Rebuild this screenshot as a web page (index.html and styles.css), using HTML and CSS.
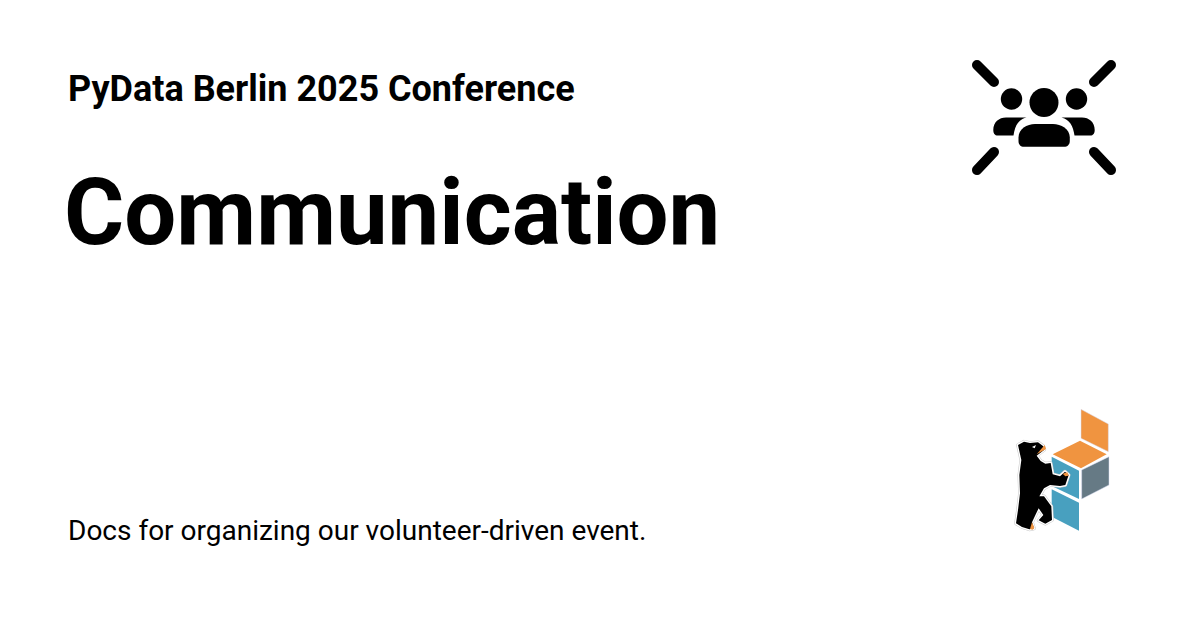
FILE: index.html
```html
<!DOCTYPE html>
<html lang="en">
<head>
<meta charset="utf-8">
<title>Communication</title>
<link rel="stylesheet" href="styles.css">
</head>
<body>
<main class="card">
  <div class="top">
    <div class="titles">
      <div class="site">PyData Berlin 2025 Conference</div>
      <h1 class="title">Communication</h1>
    </div>
    <svg class="icon" viewBox="960 50 170 135" width="170" height="135" aria-hidden="true">
      <g stroke="#000" stroke-width="10" stroke-linecap="round">
        <path d="M977 65 994 82M1111 65 1094 82M994 152 977 170M1094 152 1111 170"/>
      </g>
      <circle cx="1044" cy="102.5" r="14.5"/>
      <circle cx="1011.5" cy="99" r="10.7"/>
      <circle cx="1076.5" cy="99" r="10.7"/>
      <path d="M1018.5 137.5C1018.5 129 1027 124 1035 124H1053C1061 124 1069.8 129 1069.8 137.5V141C1069.8 144.5 1067.5 146.8 1064 146.8H1024C1020.5 146.8 1018.5 144.5 1018.5 141Z"/>
      <path d="M1026.5 117.4C1018 119.5 1015 126 1013.5 135.6H998C994.5 135.6 993.3 133 993.3 130C993.3 122 999 117.4 1006 117.4Z"/>
      <path d="M1061.5 117.4C1070 119.5 1073 126 1074.5 135.6H1090C1093.5 135.6 1094.7 133 1094.7 130C1094.7 122 1089 117.4 1082 117.4Z"/>
    </svg>
  </div>
  <div class="bottom">
    <p class="desc">Docs for organizing our volunteer-driven event.</p>
    <svg class="logo" viewBox="0 0 345 420" width="115" height="140" aria-hidden="true">
      <defs>
        <path id="bear" d="M24 30 42 20 60 24 84 22 100 34 103 44 80 62 92 78 106 86 122 84 128 118 150 124 165 110 176 120 166 150 150 153 120 150 102 160 88 184 102 184 124 214 126 255 106 266 86 256 100 240 86 220 78 236 66 262 72 280 58 283 36 276 18 265 24 225 30 175 28 120 34 75Z"/>
      </defs>
      <path class="back edge" d="M228 28 310 72V155L228 115Z"/>
      <path class="back" d="M225 122 305 163 228 205 143 163Z"/>
      <path class="grey edge" d="M312 170V255L230 297V210Z"/>
      <path class="teal" d="M140 170 222 212V297L140 258Z"/>
      <path class="teal" d="M140 268 222 308V392L140 350Z"/>
      <g transform="translate(15 105)">
        <use href="#bear" class="bear-line"/>
        <use href="#bear" class="bear-gap"/>
        <use href="#bear" class="bear"/>
        <path class="orange" d="M80 58 104 30 108 42Z"/>
        <path class="gap" d="M66 36 78 30 74 40Z"/>
        <path class="orange" d="M158 116 172 112 176 122 166 124Z"/>
        <path class="orange" d="M60 282 66 262 73 278 68 284Z"/>
      </g>
    </svg>
  </div>
</main>
</body>
</html>
```
FILE: styles.css
```css
* { box-sizing: border-box; }
html, body { margin: 0; padding: 0; }
body {
  width: 1200px;
  height: 630px;
  overflow: hidden;
  background: #fff;
  color: #000;
  font-family: Roboto, "Liberation Sans", sans-serif;
}
.card {
  height: 630px;
  display: flex;
  flex-direction: column;
  justify-content: space-between;
  padding: 50px 70px 90px 68px;
}
.top, .bottom {
  display: flex;
  justify-content: space-between;
}
.bottom { align-items: flex-end; margin-right: 10px; }
.site {
  font-size: 36px;
  font-weight: 700;
  line-height: 78px;
  margin-bottom: 30px;
}
.title {
  margin: 0 0 0 -4px;
  font-size: 92.16px;
  font-weight: 700;
  line-height: 110px;
}
.icon { display: block; }
.desc {
  margin: 0 0 -11px;
  font-size: 28px;
  line-height: 40px;
}
.logo { display: block; }
.back { fill: #f09440; }
.grey { fill: #667a85; }
.teal { fill: #48a0bf; }
.edge { stroke: #d9dcf2; stroke-width: 1.5; }
.bear { fill: #000; }
.bear-line { fill: none; stroke: #c8c8c8; stroke-width: 11; stroke-linejoin: round; }
.bear-gap { fill: none; stroke: #fff; stroke-width: 8; stroke-linejoin: round; }
.orange { fill: #f09440; }
.gap { fill: #fff; }
```
